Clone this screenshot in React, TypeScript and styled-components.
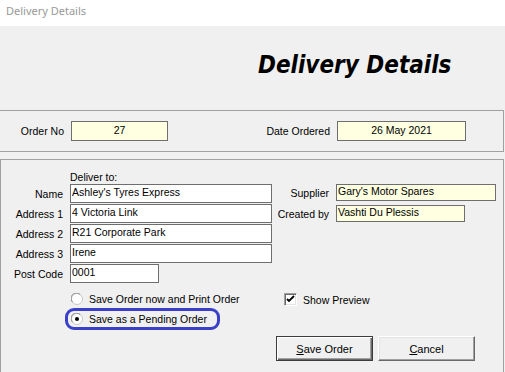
import React from 'react';
import styled, { createGlobalStyle } from 'styled-components';

const GlobalStyle = createGlobalStyle`
  html, body {
    margin: 0;
    padding: 0;
  }
  body {
    width: 505px;
    height: 372px;
    overflow: hidden;
    background: #f0f0f0;
    font-family: "Liberation Sans", Arial, sans-serif;
    font-size: 10.5px;
    color: #000;
  }
`;

const Radio: React.FC<{ checked?: boolean }> = ({ checked }) => (
  <RadioIcon width="12" height="12" viewBox="0 0 12 12">
    <circle cx="6" cy="6" r="5.5" fill="#fff" stroke="#c8c8c8" />
    <path d="M1.6 9.2 A5 5 0 0 1 9.2 1.6" fill="none" stroke="#8a8a8a" />
    {checked && <circle cx="6" cy="6" r="2" fill="#000" />}
  </RadioIcon>
);

const App: React.FC = () => {
  return (
    <Window>
      <GlobalStyle />
      <TitleBar>Delivery Details</TitleBar>

      {/* 큰 제목 */}
      <Heading>
        <HeadingText>Delivery Details</HeadingText>
      </Heading>

      {/* 주문 번호 / 날짜 */}
      <OrderGroup>
        <FieldLabel $width={63}>Order No</FieldLabel>
        <Box $width={97} $height={20} $yellow $center>
          27
        </Box>
        <FieldLabel $width={162}>Date Ordered</FieldLabel>
        <Box $width={129} $height={20} $yellow $center>
          26 May 2021
        </Box>
      </OrderGroup>

      {/* 배송 정보 */}
      <DetailGroup>
        <TopArea>
          <LeftCol>
            <DeliverTo>Deliver to:</DeliverTo>
            {addressFields.map((field) => (
              <FieldRow key={field.label}>
                <FieldLabel $width={62}>{field.label}</FieldLabel>
                <Box $width={field.width} $height={19}>
                  {field.value}
                </Box>
              </FieldRow>
            ))}
          </LeftCol>
          <RightCol>
            <FieldRow $gap={4} $height={17}>
              <FieldLabel $width={57}>Supplier</FieldLabel>
              <Box $width={160} $height={17} $yellow>
                Gary's Motor Spares
              </Box>
            </FieldRow>
            <FieldRow $height={17}>
              <FieldLabel $width={57}>Created by</FieldLabel>
              <Box $width={129} $height={17} $yellow>
                Vashti Du Plessis
              </Box>
            </FieldRow>
          </RightCol>
        </TopArea>

        <OptionsArea>
          <RadioGroup>
            <RadioRow>
              <Radio />
              Save Order now and Print Order
            </RadioRow>
            <HighlightRow>
              <Radio checked />
              Save as a Pending Order
            </HighlightRow>
          </RadioGroup>
          <CheckRow>
            <CheckBox>
              <svg width="9" height="9" viewBox="0 0 9 9">
                <path d="M1 4 L3 6 L8 1" fill="none" stroke="#000" strokeWidth="1.8" />
              </svg>
            </CheckBox>
            Show Preview
          </CheckRow>
        </OptionsArea>

        <ButtonRow>
          <Button $default>
            <u>S</u>ave Order
          </Button>
          <Button>
            <u>C</u>ancel
          </Button>
        </ButtonRow>
      </DetailGroup>
    </Window>
  );
};

export default App;

const addressFields = [
  { label: 'Name', value: "Ashley's Tyres Express", width: 202 },
  { label: 'Address 1', value: '4 Victoria Link', width: 202 },
  { label: 'Address 2', value: 'R21 Corporate Park', width: 202 },
  { label: 'Address 3', value: 'Irene', width: 202 },
  { label: 'Post Code', value: '0001', width: 89 },
];

const Window = styled.div`
  display: flex;
  flex-direction: column;
  height: 372px;
`;
const TitleBar = styled.div`
  height: 26px;
  box-sizing: border-box;
  padding-left: 6px;
  background: #fff;
  color: #999;
  font-family: "Noto Sans", "Open Sans", sans-serif;
  font-size: 11px;
  line-height: 22px;
`;
const Heading = styled.div`
  height: 84px;
  box-sizing: border-box;
  padding: 25px 0 0 258px;
`;
const HeadingText = styled.h1`
  margin: 0;
  font-family: "DejaVu Sans Condensed", "DejaVu Sans", sans-serif;
  font-stretch: condensed;
  font-style: italic;
  font-weight: 700;
  font-size: 24px;
  line-height: 28px;
  white-space: nowrap;
`;
// 그룹 박스
const OrderGroup = styled.div`
  display: flex;
  align-items: center;
  height: 42px;
  box-sizing: border-box;
  margin-left: -1px;
  width: 505px;
  padding-left: 1px;
  border: 1px solid #a0a0a0;
`;
const DetailGroup = styled.div`
  flex: 1;
  margin-top: 7px;
  width: 504px;
  box-sizing: border-box;
  padding-top: 10px;
  border: 1px solid #a0a0a0;
  border-bottom: none;
`;
const FieldLabel = styled.span<{ $width: number }>`
  flex-shrink: 0;
  width: ${(p) => p.$width}px;
  margin-right: 7px;
  text-align: right;
  white-space: nowrap;
`;
const Box = styled.div<{ $width: number; $height: number; $yellow?: boolean; $center?: boolean }>`
  flex-shrink: 0;
  width: ${(p) => p.$width}px;
  height: ${(p) => p.$height}px;
  box-sizing: border-box;
  border: 1px solid #6e6e6e;
  background: ${(p) => (p.$yellow ? '#ffffe1' : '#fff')};
  padding-left: ${(p) => (p.$center ? 0 : 1)}px;
  text-align: ${(p) => (p.$center ? 'center' : 'left')};
  line-height: ${(p) => p.$height - 4}px;
  white-space: nowrap;
  overflow: hidden;
`;
const TopArea = styled.div`
  display: flex;
`;
const LeftCol = styled.div`
  display: flex;
  flex-direction: column;
`;
const RightCol = styled.div`
  display: flex;
  flex-direction: column;
  padding-top: 14px;
`;
const DeliverTo = styled.div`
  height: 14px;
  line-height: 14px;
  padding-left: 69px;
`;
const FieldRow = styled.div<{ $gap?: number; $height?: number }>`
  display: flex;
  align-items: center;
  height: ${(p) => p.$height ?? 19}px;
  margin-bottom: ${(p) => p.$gap ?? 1}px;
`;
const OptionsArea = styled.div`
  display: flex;
  align-items: flex-start;
  margin-top: 5px;
`;
const RadioGroup = styled.div`
  display: flex;
  flex-direction: column;
  margin-left: 64px;
  width: 155px;
`;
const RadioIcon = styled.svg`
  flex-shrink: 0;
`;
const RadioRow = styled.label`
  display: flex;
  align-items: center;
  gap: 6px;
  height: 19px;
  padding-left: 6px;
  white-space: nowrap;
`;
const HighlightRow = styled(RadioRow)`
  height: 22px;
  box-sizing: border-box;
  padding-left: 3px;
  border: 3px solid #3b40c8;
  border-radius: 9px;
`;
const CheckRow = styled.label`
  display: flex;
  align-items: center;
  gap: 6px;
  height: 21px;
  margin-left: 64px;
  white-space: nowrap;
`;
const CheckBox = styled.span`
  display: flex;
  align-items: center;
  justify-content: center;
  width: 13px;
  height: 13px;
  box-sizing: border-box;
  background: #fff;
  border: 1px solid;
  border-color: #a0a0a0 #fff #fff #a0a0a0;
  box-shadow: inset 1px 1px #696969, inset -1px -1px #e3e3e3;
`;
const ButtonRow = styled.div`
  display: flex;
  gap: 5px;
  margin-top: 6px;
  padding-left: 275px;
`;
const Button = styled.button<{ $default?: boolean }>`
  width: 97px;
  height: 25px;
  padding: 0;
  font-family: inherit;
  font-size: 11px;
  color: #000;
  background: #f0f0f0;
  border: 1px solid;
  border-color: ${(p) => (p.$default ? '#3c3c3c' : '#fff #696969 #696969 #fff')};
  box-shadow: ${(p) =>
    p.$default
      ? 'inset 1px 1px #fff, inset -1px -1px #696969, inset -2px -2px #a0a0a0'
      : 'inset -1px -1px #a0a0a0, inset 1px 1px #e3e3e3'};

  u {
    text-decoration-thickness: 1px;
  }
`;
